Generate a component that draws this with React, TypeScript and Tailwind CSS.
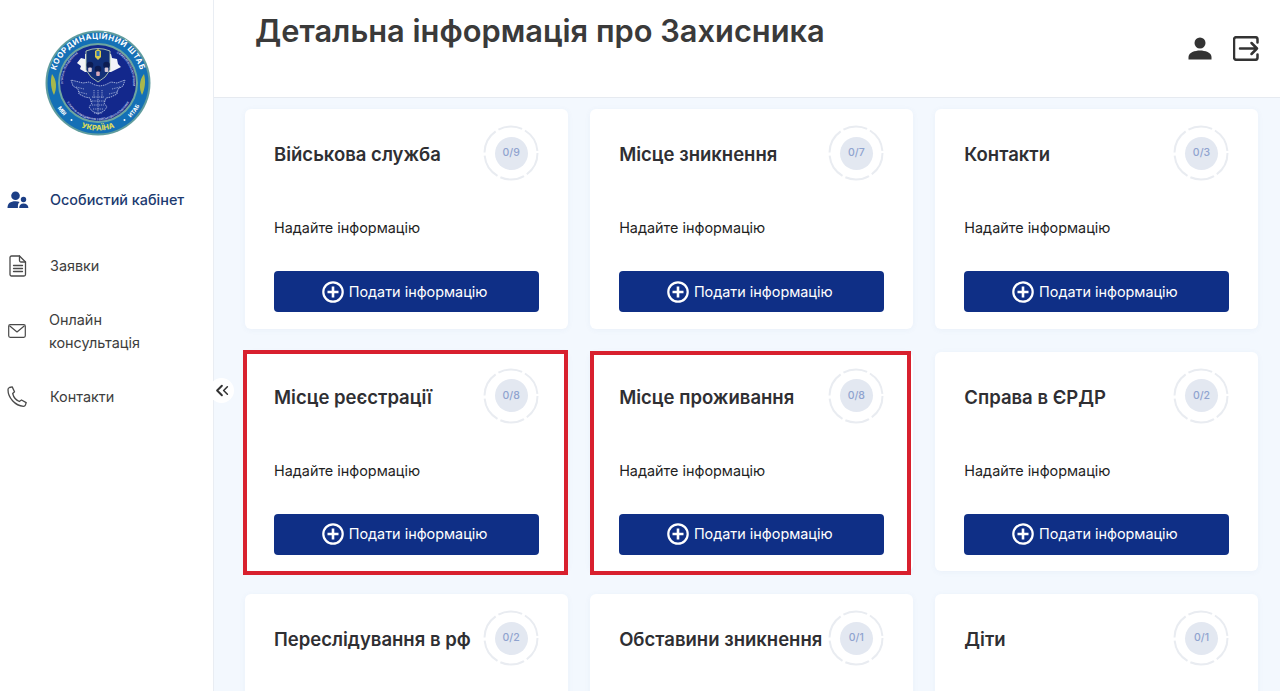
import { ChevronLeft } from 'lucide-react';

const cards = [
    { title: 'Військова служба', count: '0/9' },
    { title: 'Місце зникнення', count: '0/7' },
    { title: 'Контакти', count: '0/3' },
    { title: 'Місце реєстрації', count: '0/8', marked: 'left' },
    { title: 'Місце проживання', count: '0/8', marked: 'right' },
    { title: 'Справа в ЄРДР', count: '0/2' },
    { title: 'Переслідування в рф', count: '0/2' },
    { title: 'Обставини зникнення', count: '0/1' },
    { title: 'Діти', count: '0/1' },
];

function Logo() {
    return (
        <svg width="106" height="106" viewBox="0 0 106 106">
            <defs>
                <path id="arcTop" d="M 10 62 A 44 44 0 1 1 96 62" />
                <path id="arcBottom" d="M 5.500 53 A 47.500 47.500 0 0 0 100.500 53" />
                <path id="arcInner" d="M 19 66 A 36 36 0 0 0 87 66" />
                <path id="arcInnerTop" d="M 19.500 62 A 34.500 34.500 0 0 1 40 20" />
                <path id="arcInnerRight" d="M 66 20 A 34.500 34.500 0 0 1 86.500 62" />
            </defs>
            <circle cx="53" cy="53" r="52.500" fill="#5f9c9e" />
            <circle cx="53" cy="53" r="50.500" fill="#1470b6" />
            <circle cx="53" cy="53" r="40" fill="#6ea6a0" />
            <circle cx="53" cy="53" r="38" fill="#13288c" />
            <text fontFamily="Inter, sans-serif" fontSize="7.800" fontWeight="700" fill="#ffffff" letterSpacing="0.500">
                <textPath href="#arcTop" startOffset="50%" textAnchor="middle">
                    КООРДИНАЦІЙНИЙ ШТАБ
                </textPath>
            </text>
            <text fontFamily="Inter, sans-serif" fontSize="7.500" fontWeight="800" fill="#d9d95a">
                <textPath href="#arcBottom" startOffset="50%" textAnchor="middle">
                    УКРАЇНА
                </textPath>
            </text>
            <text fontFamily="Inter, sans-serif" fontSize="5.500" fontWeight="700" fill="#ffffff">
                <textPath href="#arcBottom" startOffset="21%" textAnchor="middle">
                    МВІ
                </textPath>
            </text>
            <text fontFamily="Inter, sans-serif" fontSize="5.500" fontWeight="700" fill="#ffffff">
                <textPath href="#arcBottom" startOffset="79%" textAnchor="middle">
                    ИТАБ
                </textPath>
            </text>
            <circle cx="26.500" cy="90" r="1" fill="#ffffff" />
            <circle cx="79.500" cy="90" r="1" fill="#ffffff" />
            <path d="M7 44c-2 7-1 15 2 21 3-6 3-15-2-21zM99 44c2 7 1 15-2 21-3-6-3-15 2-21z" fill="#a9b84c" />
            <path d="M32 33l4-5 4 1 0-5 26 0 1 4 5 1 1 5 3 3-6 3-4 2-26 0-5-3 1-3z" fill="#f2f4f8" />
            <path d="M41 21q12-5 24 0v19q-4 8-12 12-8-4-12-12z" fill="#123078" stroke="#b7c9b0" strokeWidth="0.900" />
            <path d="M53 19l-3 2v6q2 2 3 3 1-1 3-3v-6z" fill="#d9c94a" />
            <path d="M51.500 21h3v5h-3z" fill="#2a70b8" />
            <circle cx="45" cy="35" r="3.300" fill="#0c1c52" />
            <circle cx="53" cy="39" r="3.300" fill="#0c1c52" />
            <circle cx="61.500" cy="35" r="3.300" fill="#0c1c52" />
            <rect x="43.200" y="37.500" width="3.600" height="4.500" rx="1" fill="#d8c9d8" />
            <rect x="51.200" y="41.500" width="3.600" height="4.500" rx="1" fill="#d8a8b8" />
            <rect x="59.700" y="37.500" width="3.600" height="4.500" rx="1" fill="#d8c9d8" />
            <path
                d="M26 50l2 6 5 3 1 5 6 3 5 1 2 5-3 4 3 4 6 3 6-3 3-4-3-4 2-5 5-1 6-3 1-5 5-3 2-6-8 3-6-1-6 3-5 1-5-1-6-3-6 1z"
                fill="#1c3594"
                stroke="#c2cdea"
                strokeWidth="0.800"
                strokeDasharray="1.500 0.800"
            />
            <path
                d="M31 57l8 2M34 62l8 2M75 57l-8 2M72 62l-8 2M47 67h12M45 71h16M47 75h12M48 79h10M49 83h8M53 60v25M49 60v8M57 60v8"
                stroke="#c8d2ec"
                strokeWidth="0.700"
                strokeDasharray="1 0.800"
                fill="none"
            />
            <text fontFamily="Inter, sans-serif" fontSize="2.700" fontWeight="600" fill="#d6def2">
                <textPath href="#arcInner" startOffset="50%" textAnchor="middle">
                    З ПИТАНЬ ПОВОДЖЕННЯ З ВІЙСЬКОВОПОЛОНЕНИМИ
                </textPath>
            </text>
            <text fontFamily="Inter, sans-serif" fontSize="2.700" fontWeight="600" fill="#d6def2">
                <textPath href="#arcInnerTop" startOffset="50%" textAnchor="middle">
                    З ПИТАНЬ ПОВОДЖЕННЯ
                </textPath>
            </text>
            <text fontFamily="Inter, sans-serif" fontSize="2.700" fontWeight="600" fill="#d6def2">
                <textPath href="#arcInnerRight" startOffset="50%" textAnchor="middle">
                    З ВІЙСЬКОВОПОЛОНЕНИМИ
                </textPath>
            </text>
        </svg>
    );
}

function CabinetIcon() {
    return (
        <svg width="22" height="18" viewBox="0 0 22 18" fill="#1c3f86" className="ml-[1px]">
            <circle cx="8.500" cy="4.800" r="4.300" />
            <path d="M0.500 17c0-4.800 2.800-6.800 8-6.800 1.600 0 3 .2 4.200.7-1.200 1-1.800 2.400-1.800 4.200V17z" />
            <circle cx="16.500" cy="8.500" r="2.700" />
            <path d="M12.200 17c0-3 1.500-4.600 4.300-4.600s4.900 1.600 4.900 4.600z" />
        </svg>
    );
}

function FileIcon() {
    return (
        <svg width="18" height="22" viewBox="0 0 18 22" fill="none" stroke="#4a4a4a" strokeWidth="1.300" strokeLinejoin="round" strokeLinecap="round" className="ml-[3px]">
            <path d="M2.500 1h8l6 6v12.500a1.500 1.500 0 0 1-1.500 1.500h-12.500a1.500 1.500 0 0 1-1.500-1.500v-17a1.500 1.500 0 0 1 1.500-1.500z" />
            <path d="M10.500 1v4.500a1.500 1.500 0 0 0 1.500 1.500h4.500" />
            <path d="M4.500 10.500h9M4.500 13.500h9M4.500 16.500h9" />
        </svg>
    );
}

function MailIcon() {
    return (
        <svg width="18" height="14" viewBox="0 0 18 14" fill="none" stroke="#4a4a4a" strokeWidth="1.200" strokeLinejoin="round" className="ml-[2px]">
            <rect x="0.700" y="0.700" width="16.600" height="12.600" rx="1.500" />
            <path d="M1.500 1.700l7.500 6.300 7.500-6.300" />
        </svg>
    );
}

function PhoneIcon() {
    return (
        <svg width="21" height="21" viewBox="0 0 21 21" fill="none" stroke="#4a4a4a" strokeWidth="1.300" strokeLinejoin="round" className="ml-[1px]">
            <path d="M2.500 1.500l2.700-.6 2.300 4.800-1.800 1.800c.8 3.500 3.200 6.500 6.600 8l2.200-1.500 4.700 2.600-.8 2.400c-.3.800-1 1.300-1.900 1.300C8 19.800 1 11.500 1 3.800c0-1 .6-2 1.500-2.300z" />
        </svg>
    );
}

function UserIcon() {
    return (
        <svg width="24" height="24" viewBox="0 0 24 24" fill="#333333">
            <circle cx="12" cy="7" r="5.500" />
            <path d="M0.500 23.500v-2.500c0-4.500 6.500-6.500 11.500-6.500s11.500 2 11.500 6.500v2.500z" />
        </svg>
    );
}

function ExitIcon() {
    return (
        <svg width="26" height="25" viewBox="0 0 26 25" fill="none" stroke="#333333" strokeWidth="2.500" strokeLinecap="round" strokeLinejoin="round">
            <path d="M24.500 6.500v-3a2.300 2.300 0 0 0-2.300-2.300h-18.900a2.300 2.300 0 0 0-2.300 2.300v18a2.300 2.300 0 0 0 2.300 2.300h18.900a2.300 2.300 0 0 0 2.300-2.300v-3" />
            <path d="M7 12.500h17M18.500 7l5.500 5.500-5.500 5.500" />
        </svg>
    );
}

function PlusCircle() {
    return (
        <svg width="22" height="22" viewBox="0 0 22 22" fill="none" stroke="#ffffff" strokeWidth="2.200">
            <circle cx="11" cy="11" r="9.700" />
            <path d="M11 5.500v11M5.500 11h11" strokeWidth="2.600" />
        </svg>
    );
}

function Progress({ value }: { value: string }) {
    return (
        <div className="relative w-[56px] h-[56px] shrink-0 flex items-center justify-center">
            <svg width="56" height="56" viewBox="0 0 56 56" className="absolute inset-0">
                <circle cx="28" cy="28" r="26.500" fill="none" stroke="#e9ecf1" strokeWidth="2" strokeDasharray="24.500 3.250" />
            </svg>
            <div className="w-[33px] h-[33px] rounded-full bg-[#e3e8f1] flex items-center justify-center text-[10.500px] font-medium text-[#8fa3cf]">
                {value}
            </div>
        </div>
    );
}

function Card({ title, count, marked }: { title: string; count: string; marked?: string }) {
    return (
        <div className="relative h-[219.500px] bg-white rounded-md shadow-[0_1px_6px_rgba(60,90,150,0.05)] pt-[16px] pb-[16px] pl-[29px] pr-[29px] flex flex-col">
            <div className="flex items-center justify-between h-[56px]">
                <h3 className="pt-[4px] text-[18.500px] font-semibold text-[#2f2f33] whitespace-nowrap">{title}</h3>
                <Progress value={count} />
            </div>
            <p className="mt-[36px] text-[14.400px] leading-[22px] text-[#1f1f1f]">Надайте інформацію</p>
            <button className="mt-[32px] h-[41px] w-full rounded-[4px] bg-[#0f2f86] text-white text-[14.400px] flex items-center justify-center gap-[5px] pr-[4px]">
                <PlusCircle />
                Подати інформацію
            </button>
            {marked === 'left' && (
                <div className="absolute -left-[2px] -top-[1.500px] right-0 -bottom-[3.500px] border-4 border-[#d8202e] pointer-events-none" />
            )}
            {marked === 'right' && (
                <div className="absolute left-0 -top-[0.500px] right-[2px] -bottom-[4px] border-4 border-[#d8202e] pointer-events-none" />
            )}
        </div>
    );
}

function NavItem({ icon, active, children }: { icon: React.ReactNode; active?: boolean; children: React.ReactNode }) {
    return (
        <div className="h-[65.700px] flex items-center">
            <div className="w-[50px] pl-[6px] shrink-0 flex">{icon}</div>
            <span className={active ? 'text-[14.400px] font-medium text-[#1c3a70]' : 'text-[14.400px] leading-[23px] text-[#3d3d3d]'}>{children}</span>
        </div>
    );
}

export default function App() {
    return (
        <div className="h-screen flex overflow-hidden bg-[#f3f8fe] font-['Inter',sans-serif]">
            <aside className="relative z-10 w-[214px] shrink-0 bg-white border-r border-[#e9edf3]">
                <div className="h-[167px] pt-[30px] pl-[45px]">
                    <Logo />
                </div>
                <NavItem icon={<CabinetIcon />} active>
                    Особистий кабінет
                </NavItem>
                <NavItem icon={<FileIcon />}>Заявки</NavItem>
                <NavItem icon={<MailIcon />}>
                    <span className="block -ml-[1px] w-[110px]">Онлайн консультація</span>
                </NavItem>
                <NavItem icon={<PhoneIcon />}>Контакти</NavItem>
                <div className="absolute left-[209px] top-[378px] w-[25px] h-[25px] rounded-full bg-white flex items-center justify-center text-[#333333]">
                    <ChevronLeft size={19} strokeWidth={2.500} className="-mr-[11px]" />
                    <ChevronLeft size={15} strokeWidth={2.500} />
                </div>
            </aside>
            <div className="flex-1 min-w-0 flex flex-col">
                <header className="h-[98px] shrink-0 bg-white border-b border-[#e6eaf0] flex justify-between pl-[41px] pr-[21px]">
                    <h1 className="mt-[11px] text-[30.800px] leading-[40px] font-semibold text-[#3a3a3a]">Детальна інформація про Захисника</h1>
                    <div className="flex items-start gap-[21px] pt-[36px]">
                        <UserIcon />
                        <ExitIcon />
                    </div>
                </header>
                <main className="flex-1 overflow-hidden pt-[11px] pl-[31px] pr-[21.500px]">
                    <div className="grid grid-cols-3 gap-x-[22px] gap-y-[23px]">
                        {cards.map((card) => (
                            <Card key={card.title} title={card.title} count={card.count} marked={card.marked} />
                        ))}
                    </div>
                </main>
            </div>
        </div>
    );
}
